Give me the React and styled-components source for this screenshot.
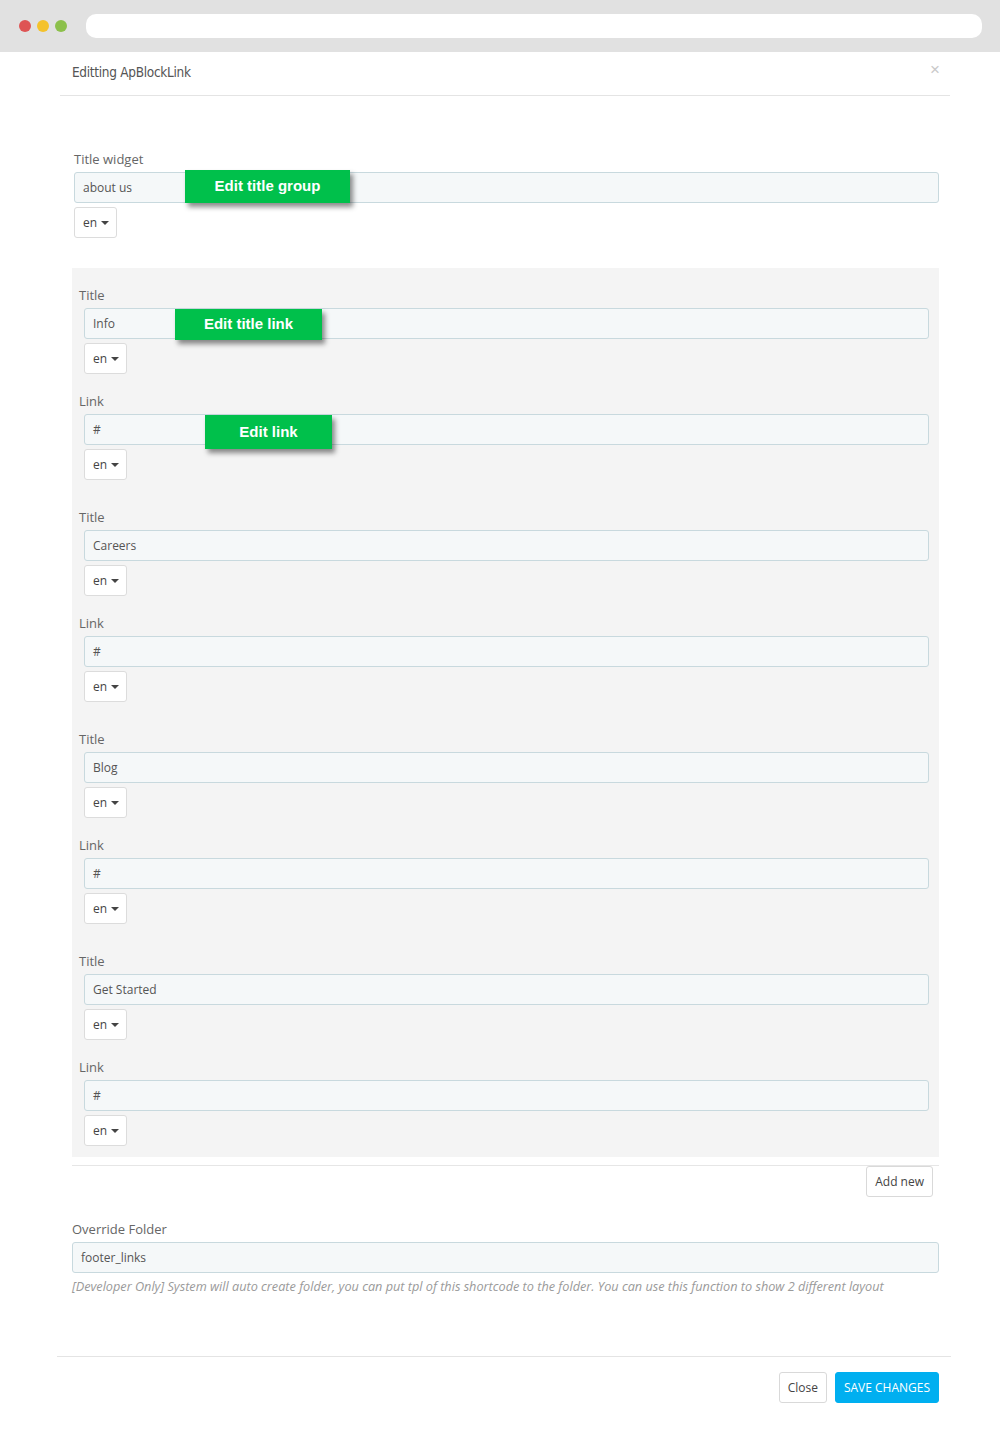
import React from "react";
import styled, { createGlobalStyle } from "styled-components";

const GlobalStyle = createGlobalStyle`
  body {
    margin: 0;
    background: #fff;
    font-family: "Open Sans", "Liberation Sans", sans-serif;
    color: #555;
  }
`;

const BrowserBar = styled.div`
  height: 52px;
  background: #e1e1e1;
  display: flex;
  align-items: center;
  padding: 0 18px 0 19px;
  box-sizing: border-box;
`;

const Dot = styled.span`
  width: 12px;
  height: 12px;
  border-radius: 50%;
  background: ${(p) => p.color};
  margin-right: 6px;
`;

const UrlBar = styled.div`
  flex: 1;
  height: 24px;
  margin-left: 13px;
  background: #fff;
  border-radius: 10px;
`;

const Modal = styled.div`
  margin: 0 49px 0 57px;
  background: #fff;
`;

const ModalHeader = styled.div`
  height: 43px;
  display: flex;
  align-items: center;
  justify-content: space-between;
  padding: 0 10px 0 12px;
  border-bottom: 1px solid #e4e4e4;
  margin: 0 1px 0 3px;
`;

const ModalTitle = styled.h4`
  margin: 0;
  font-family: "DejaVu Sans", sans-serif;
  font-stretch: condensed;
  font-size: 13.5px;
  letter-spacing: -0.3px;
  font-weight: 400;
  color: #555;
  padding-bottom: 3px;
`;

const CloseX = styled.span`
  font-family: "Liberation Sans", sans-serif;
  font-size: 17px;
  color: #c9c9c9;
  margin-top: -8px;
`;

const ModalBody = styled.div`
  padding: 53px 12px 61px 15px;
`;

const WidgetSection = styled.div`
  padding: 0 0 0 2px;
`;

const Label = styled.div`
  font-size: 13px;
  line-height: 20px;
  color: #666;
`;

const InputWrap = styled.div`
  position: relative;
  margin-top: 3px;
  margin-left: ${(p) => p.indent || 0}px;
`;

const TextInput = styled.div`
  height: 31px;
  box-sizing: border-box;
  background: #f5f8f9;
  border: 1px solid #c8d9de;
  border-radius: 3px;
  padding: 0 8px;
  display: flex;
  align-items: center;
  font-size: 12px;
  color: #555;
`;

const Badge = styled.div`
  position: absolute;
  left: ${(p) => p.left}px;
  top: ${(p) => p.top}px;
  width: ${(p) => p.w}px;
  height: ${(p) => p.h}px;
  background: #00c04b;
  color: #fff;
  font-family: "Liberation Sans", Arial, sans-serif;
  font-weight: 700;
  font-size: 15px;
  display: flex;
  align-items: center;
  justify-content: center;
  padding-bottom: 2px;
  box-sizing: border-box;
  box-shadow: 3px 4px 5px rgba(0, 0, 0, 0.45);
`;

const LangButton = styled.div`
  margin-top: 4px;
  margin-left: ${(p) => p.indent || 0}px;
  width: 43px;
  height: 31px;
  box-sizing: border-box;
  background: #fff;
  border: 1px solid #dcdcdc;
  border-radius: 3px;
  display: flex;
  align-items: center;
  padding-left: 8px;
  font-size: 12px;
  color: #444;
  &::after {
    content: "";
    margin-left: 4px;
    margin-top: 1px;
    border-left: 4px solid transparent;
    border-right: 4px solid transparent;
    border-top: 4px solid #444;
  }
`;

const Panel = styled.div`
  margin-top: 30px;
  background: #f4f4f4;
  padding: 17px 10px 11px 7px;
`;

const Group = styled.div`
  & + & {
    margin-top: 27px;
  }
`;

const Field = styled.div`
  & + & {
    margin-top: 17px;
  }
`;

const Divider = styled.div`
  margin-top: 8px;
  border-top: 1px solid #e6e6e6;
  display: flex;
  justify-content: flex-end;
  padding-right: 6px;
`;

const Button = styled.button`
  height: 31px;
  box-sizing: border-box;
  padding: 0 8px;
  border-radius: 3px;
  font-family: "Open Sans", "Liberation Sans", sans-serif;
  font-size: 12px;
  cursor: pointer;
  background: ${(p) => (p.primary ? "#00aff0" : "#fff")};
  color: ${(p) => (p.primary ? "#fff" : "#444")};
  border: 1px solid ${(p) => (p.primary ? "#00aff0" : "#d9d9d9")};
`;

const OverrideSection = styled.div`
  margin-top: 22px;
`;

const HelpText = styled.p`
  margin: 5px 0 0;
  font-size: 12.7px;
  line-height: 17px;
  font-style: italic;
  color: #9a9a9a;
`;

const ModalFooter = styled.div`
  border-top: 1px solid #e4e4e4;
  padding: 15px 12px 0 0;
  display: flex;
  justify-content: flex-end;
  gap: 8px;
`;

const links = [
  {
    title: "Info",
    link: "#",
    titleBadge: { text: "Edit title link", left: 91, top: 1, w: 147, h: 31 },
    linkBadge: { text: "Edit link", left: 121, top: 1, w: 127, h: 34 },
  },
  { title: "Careers", link: "#" },
  { title: "Blog", link: "#" },
  { title: "Get Started", link: "#" },
];

const LangField = ({ label, value, badge }) => (
  <Field>
    <Label>{label}</Label>
    <InputWrap indent={5}>
      <TextInput>{value}</TextInput>
      {badge && (
        <Badge left={badge.left} top={badge.top} w={badge.w} h={badge.h}>
          {badge.text}
        </Badge>
      )}
    </InputWrap>
    <LangButton indent={5}>en</LangButton>
  </Field>
);

export default function App() {
  return (
    <>
      <GlobalStyle />
      <BrowserBar>
        <Dot color="#de5454" />
        <Dot color="#f4c22b" />
        <Dot color="#8cc04b" />
        <UrlBar />
      </BrowserBar>
      <Modal>
        <ModalHeader>
          <ModalTitle>Editting ApBlockLink</ModalTitle>
          <CloseX>×</CloseX>
        </ModalHeader>
        <ModalBody>
          <WidgetSection>
            <Label>Title widget</Label>
            <InputWrap>
              <TextInput>about us</TextInput>
              <Badge left={111} top={-2} w={165} h={33}>
                Edit title group
              </Badge>
            </InputWrap>
            <LangButton>en</LangButton>
          </WidgetSection>

          <Panel>
            {links.map((item) => (
              <Group key={item.title}>
                <LangField label="Title" value={item.title} badge={item.titleBadge} />
                <LangField label="Link" value={item.link} badge={item.linkBadge} />
              </Group>
            ))}
          </Panel>

          <Divider>
            <Button>Add new</Button>
          </Divider>

          <OverrideSection>
            <Label>Override Folder</Label>
            <InputWrap>
              <TextInput>footer_links</TextInput>
            </InputWrap>
            <HelpText>
              [Developer Only] System will auto create folder, you can put tpl of
              this shortcode to the folder. You can use this function to show 2
              different layout
            </HelpText>
          </OverrideSection>
        </ModalBody>
        <ModalFooter>
          <Button>Close</Button>
          <Button primary>SAVE CHANGES</Button>
        </ModalFooter>
      </Modal>
    </>
  );
}
